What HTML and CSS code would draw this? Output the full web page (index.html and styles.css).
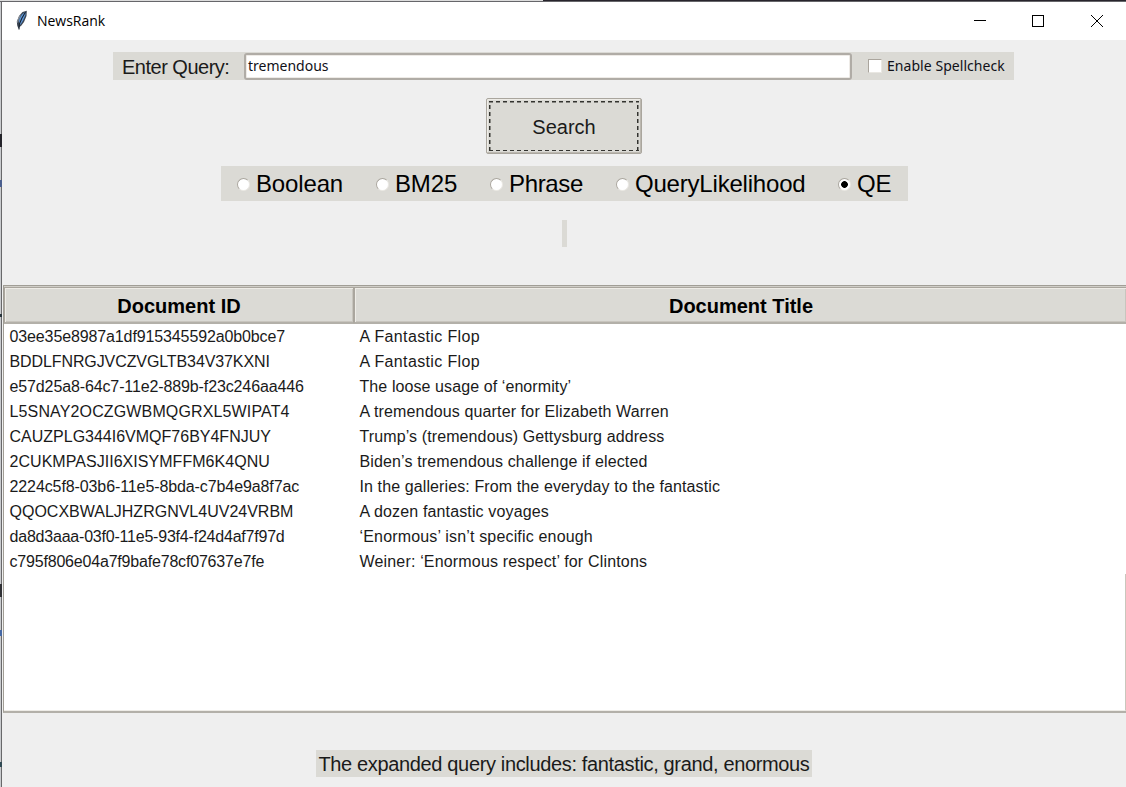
FILE: index.html
```html
<!DOCTYPE html>
<html lang="en">
<head>
<meta charset="utf-8">
<title>NewsRank</title>
<link rel="stylesheet" href="styles.css">
</head>
<body>
<div class="edge"></div>
<div class="desktop-left"><i class="m1"></i><i class="m2"></i><i class="m3"></i><i class="m4"></i><i class="m5"></i><i class="m6"></i></div>
<main class="window">
  <header class="titlebar">
    <svg class="feather" width="14" height="22" viewBox="0 0 14 22">
      <path d="M3.5 19 2.2 15.5 1.8 11.5 4 6 7.5 2 11.8.8 11.5 6 9 12 6 16 4.2 17Z" fill="#3c4654"/>
      <path d="M4 14.5 4.3 9 7 4.5 10.5 1.8 10.4 5 8 10.5 5.5 14.5Z" fill="#5f9be0"/>
      <path d="M4 19.5 4.4 14 7 8 10.5 2" fill="none" stroke="#16202c" stroke-width="1.1"/>
      <path d="M2.6 12.5 3.2 9.5 5.3 5.5" fill="none" stroke="#a4acb4" stroke-width=".9"/>
    </svg>
    <h1 class="title">NewsRank</h1>
    <svg class="controls" width="132" height="14" viewBox="0 0 132 14" fill="none" stroke="#000" shape-rendering="crispEdges">
      <path d="M0 6.5H12M58.500 1.500H69.500V12.500H58.500Z"/>
      <path d="M117 1 129 13M129 1 117 13" shape-rendering="auto"/>
    </svg>
  </header>
  <section class="query">
    <label class="query-label">Enter Query:</label>
    <div class="entry">tremendous</div>
    <span class="check"></span>
    <span class="check-label">Enable Spellcheck</span>
  </section>
  <div class="search"><span class="focus">Search</span></div>
  <section class="modes">
    <span class="mode boolean"><i class="radio"></i>Boolean</span>
    <span class="mode bm"><i class="radio"></i>BM25</span>
    <span class="mode phrase"><i class="radio"></i>Phrase</span>
    <span class="mode likelihood"><i class="radio"></i>QueryLikelihood</span>
    <span class="mode"><i class="radio on"></i>QE</span>
  </section>
  <div class="blank"></div>
  <section class="tree">
    <div class="head"><span class="th first">Document ID</span><span class="th second">Document Title</span></div>
    <div class="rows">
      <div class="row"><span class="r1">03ee35e8987a1df915345592a0b0bce7</span><span class="t1">A Fantastic Flop</span></div>
      <div class="row"><span class="r2">BDDLFNRGJVCZVGLTB34V37KXNI</span><span class="t1">A Fantastic Flop</span></div>
      <div class="row"><span class="r3">e57d25a8-64c7-11e2-889b-f23c246aa446</span><span class="t3">The loose usage of ‘enormity’</span></div>
      <div class="row"><span class="r4">L5SNAY2OCZGWBMQGRXL5WIPAT4</span><span class="t4">A tremendous quarter for Elizabeth Warren</span></div>
      <div class="row"><span class="r5">CAUZPLG344I6VMQF76BY4FNJUY</span><span class="t5">Trump’s (tremendous) Gettysburg address</span></div>
      <div class="row"><span class="r6">2CUKMPASJII6XISYMFFM6K4QNU</span><span class="t4">Biden’s tremendous challenge if elected</span></div>
      <div class="row"><span class="r7">2224c5f8-03b6-11e5-8bda-c7b4e9a8f7ac</span><span class="t5">In the galleries: From the everyday to the fantastic</span></div>
      <div class="row"><span class="r8">QQOCXBWALJHZRGNVL4UV24VRBM</span><span class="t4">A dozen fantastic voyages</span></div>
      <div class="row"><span class="r9">da8d3aaa-03f0-11e5-93f4-f24d4af7f97d</span><span class="t9">‘Enormous’ isn’t specific enough</span></div>
      <div class="row"><span class="r10">c795f806e04a7f9bafe78cf07637e7fe</span><span class="t9">Weiner: ‘Enormous respect’ for Clintons</span></div>
    </div>
    <div class="void"></div>
  </section>
  <p class="expanded">The expanded query includes: fantastic, grand, enormous</p>
</main>
</body>
</html>
```

FILE: styles.css
```css
* { box-sizing: border-box; }
body {
  margin: 0; width: 1126px; height: 787px; overflow: hidden;
  display: grid; grid-template: 2px 785px / 2px 1124px;
  font-family: "Liberation Sans", Arial, sans-serif; color: #1a1a1a;
}
.edge { grid-column: 1 / 3; background: linear-gradient(90deg, #dcdcdc 543px, #27242c 543px); border-bottom: 1px solid #66666a; }
.desktop-left { display: flex; flex-direction: column; background: #c9cbce; border-right: 1px solid #68686a; }
.desktop-left i { width: 2px; flex: none; }
.m1 { height: 13px; margin-top: 132px; background: #24242a; }
.m2 { height: 7px; margin-top: 33px; background: #4a5f8e; }
.m3 { height: 3px; margin-top: 127px; background: #28353c; }
.m4 { height: 13px; margin-top: 267px; background: #303034; }
.m5 { height: 6px; margin-top: 33px; background: #4568a4; }
.m6 { height: 5px; margin-top: 126px; background: #304a54; }
.window { display: flex; flex-direction: column; align-items: center; background: #efefef; min-width: 0; }
.titlebar { width: 1124px; height: 38px; background: #fff; display: flex; align-items: center; padding: 0 20px 0 13px; flex: none; }
.feather { margin-right: 8px; }
.title { margin: -2px 0 0; font: 400 14px "Open Sans", "Noto Sans", sans-serif; color: #000; letter-spacing: -.03px; }
.controls { margin-left: auto; }
.query { width: 901px; height: 28px; margin-top: 12px; margin-right: 1px; padding-left: 9px; background: #dbdad5; display: flex; align-items: center; flex: none; }
.query-label { width: 122px; font-size: 20px; letter-spacing: -.5px; padding-top: 2px; }
.entry { width: 608px; height: 27px; border: 2px solid #b0aca6; border-radius: 3px; background: #fff; box-shadow: inset 0 0 0 1px #eeebe7; font: 14px/21px "Noto Sans", sans-serif; padding-left: 2px; color: #101018; }
.check { width: 14px; height: 14px; margin-left: 16px; background: #fff; border: 1px solid #e9e7e2; border-top-color: #aaa59d; border-left-color: #aaa59d; }
.check-label { margin: -2px 0 0 5px; font: 14px "Noto Sans", sans-serif; letter-spacing: .05px; white-space: nowrap; color: #101018; }
.search { width: 156px; height: 56px; margin-top: 18px; margin-right: 1px; padding: 2px; border: 1px solid #aaa69e; border-radius: 2px; box-shadow: inset -1px -1px #bcb8b0, inset 1px 1px #eeece7; background: #dbdad5; flex: none; }
.focus { display: flex; height: 50px; align-items: center; justify-content: center; font-size: 20px; padding: 2px 0 0 1px;
  background:
    repeating-linear-gradient(90deg, #33332f 0 4px, transparent 4px 7px) 0 0 / 100% 1.5px no-repeat,
    repeating-linear-gradient(90deg, #33332f 0 4px, transparent 4px 7px) 0 100% / 100% 1.5px no-repeat,
    repeating-linear-gradient(0deg, #33332f 0 4px, transparent 4px 7px) 0 0 / 1.5px 100% no-repeat,
    repeating-linear-gradient(0deg, #33332f 0 4px, transparent 4px 7px) 100% 0 / 1.5px 100% no-repeat; }
.modes { width: 687px; height: 35px; margin-top: 12px; margin-left: 1px; padding: 1px 0 0 16px; background: #dbdad5; display: flex; flex: none; font-size: 24px; letter-spacing: -.15px; color: #000; }
.mode { display: flex; align-items: center; white-space: nowrap; }
.boolean { width: 139px; }
.bm { width: 114px; }
.phrase { width: 126px; letter-spacing: -.35px; }
.likelihood { width: 222px; letter-spacing: -.2px; }
.radio { width: 13px; height: 13px; margin-right: 6px; border-radius: 50%; background: #fff; border: 1px solid #eae8e3; border-top-color: #aaa69e; border-left-color: #aaa69e; }
.on { background: radial-gradient(circle, #000 3px, #fff 3.7px); }
.blank { width: 5px; height: 27px; margin-top: 19px; margin-left: 1px; background: #dbdad5; flex: none; }
.tree { width: 1123px; height: 428px; margin-top: 38px; margin-left: 1px; flex: none; background: #fff; border: 1px solid #a19e96; border-right: 0; border-bottom: 2px solid #b3b0a9; display: flex; flex-direction: column; }
.head { height: 38px; display: flex; border-top: 1px solid #d0cec8; flex: none; }
.th { display: flex; align-items: center; justify-content: center; padding-top: 2px; background: #dbdad5; border: 1px solid #aaa69e; border-bottom: 2px solid #b3b0a9; box-shadow: inset 1px 1px #eeece7, inset -1px -1px #c8c5be; font-size: 20px; font-weight: 700; color: #000; }
.first { width: 350px; }
.second { flex: 1; border-right: 0; padding-left: 1px; }
.rows { flex: none; }
.row { display: grid; grid-template-columns: 350px 1fr; height: 25px; padding: 0 0 0 5.5px; font-size: 16px; white-space: nowrap; line-height: 26px; }
.r1, .r3 { letter-spacing: -.12px; }
.r2, .r7 { letter-spacing: -.1px; }
.r4 { letter-spacing: .14px; }
.r6 { letter-spacing: .04px; }
.r9 { letter-spacing: -.21px; }
.r10 { letter-spacing: -.19px; }
.t1 { letter-spacing: .36px; }
.t3 { letter-spacing: .09px; }
.t4 { letter-spacing: .14px; }
.t5 { letter-spacing: .11px; }
.t9 { letter-spacing: .17px; }
.void { flex: 1; border-right: 1px solid #c9c7bd; border-bottom: 1px solid #eeece7; }
.expanded { width: 496px; height: 27px; margin: 37px 0 0; background: #dbdad5; text-align: center; font-size: 20px; line-height: 29px; letter-spacing: -.35px; white-space: nowrap; flex: none; }
```
